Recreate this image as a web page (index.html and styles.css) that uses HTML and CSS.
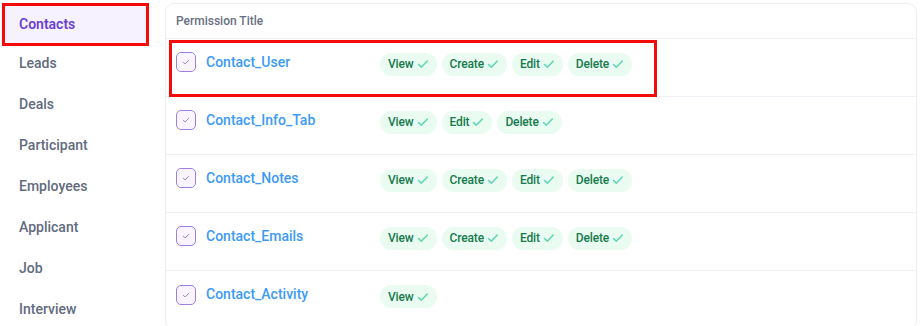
FILE: index.html
```html
<!DOCTYPE html>
<html lang="en">
<head>
    <meta charset="UTF-8">
    <title>Permissions</title>
    <link rel="stylesheet" href="styles.css">
</head>
<body>
    <div class="layout">
        <aside class="sidebar">
            <a class="side-item active" href="#">Contacts</a>
            <a class="side-item" href="#">Leads</a>
            <a class="side-item" href="#">Deals</a>
            <a class="side-item" href="#">Participant</a>
            <a class="side-item" href="#">Employees</a>
            <a class="side-item" href="#">Applicant</a>
            <a class="side-item" href="#">Job</a>
            <a class="side-item" href="#">Interview</a>
        </aside>

        <div class="card">
            <div class="card-head">Permission Title</div>

            <div class="perm-row">
                <span class="check-box"><svg viewBox="0 0 20 20"><path d="M7 10.2l2 2 4-4"/></svg></span>
                <span class="perm-title">Contact_User</span>
                <div class="pills">
                    <span class="pill">View <svg viewBox="0 0 12 12"><path d="M1.5 6.5l2.8 2.7 6-6.2"/></svg></span>
                    <span class="pill">Create <svg viewBox="0 0 12 12"><path d="M1.5 6.5l2.8 2.7 6-6.2"/></svg></span>
                    <span class="pill">Edit <svg viewBox="0 0 12 12"><path d="M1.5 6.5l2.8 2.7 6-6.2"/></svg></span>
                    <span class="pill">Delete <svg viewBox="0 0 12 12"><path d="M1.5 6.5l2.8 2.7 6-6.2"/></svg></span>
                </div>
            </div>

            <div class="perm-row">
                <span class="check-box"><svg viewBox="0 0 20 20"><path d="M7 10.2l2 2 4-4"/></svg></span>
                <span class="perm-title">Contact_Info_Tab</span>
                <div class="pills">
                    <span class="pill">View <svg viewBox="0 0 12 12"><path d="M1.5 6.5l2.8 2.7 6-6.2"/></svg></span>
                    <span class="pill">Edit <svg viewBox="0 0 12 12"><path d="M1.5 6.5l2.8 2.7 6-6.2"/></svg></span>
                    <span class="pill">Delete <svg viewBox="0 0 12 12"><path d="M1.5 6.5l2.8 2.7 6-6.2"/></svg></span>
                </div>
            </div>

            <div class="perm-row">
                <span class="check-box"><svg viewBox="0 0 20 20"><path d="M7 10.2l2 2 4-4"/></svg></span>
                <span class="perm-title">Contact_Notes</span>
                <div class="pills">
                    <span class="pill">View <svg viewBox="0 0 12 12"><path d="M1.5 6.5l2.8 2.7 6-6.2"/></svg></span>
                    <span class="pill">Create <svg viewBox="0 0 12 12"><path d="M1.5 6.5l2.8 2.7 6-6.2"/></svg></span>
                    <span class="pill">Edit <svg viewBox="0 0 12 12"><path d="M1.5 6.5l2.8 2.7 6-6.2"/></svg></span>
                    <span class="pill">Delete <svg viewBox="0 0 12 12"><path d="M1.5 6.5l2.8 2.7 6-6.2"/></svg></span>
                </div>
            </div>

            <div class="perm-row">
                <span class="check-box"><svg viewBox="0 0 20 20"><path d="M7 10.2l2 2 4-4"/></svg></span>
                <span class="perm-title">Contact_Emails</span>
                <div class="pills">
                    <span class="pill">View <svg viewBox="0 0 12 12"><path d="M1.5 6.5l2.8 2.7 6-6.2"/></svg></span>
                    <span class="pill">Create <svg viewBox="0 0 12 12"><path d="M1.5 6.5l2.8 2.7 6-6.2"/></svg></span>
                    <span class="pill">Edit <svg viewBox="0 0 12 12"><path d="M1.5 6.5l2.8 2.7 6-6.2"/></svg></span>
                    <span class="pill">Delete <svg viewBox="0 0 12 12"><path d="M1.5 6.5l2.8 2.7 6-6.2"/></svg></span>
                </div>
            </div>

            <div class="perm-row">
                <span class="check-box"><svg viewBox="0 0 20 20"><path d="M7 10.2l2 2 4-4"/></svg></span>
                <span class="perm-title">Contact_Activity</span>
                <div class="pills">
                    <span class="pill">View <svg viewBox="0 0 12 12"><path d="M1.5 6.5l2.8 2.7 6-6.2"/></svg></span>
                </div>
            </div>
        </div>
    </div>

    <!-- annotation boxes -->
    <div class="mark mark-side"></div>
    <div class="mark mark-row"></div>
</body>
</html>
```

FILE: styles.css
```css
* {
    margin: 0;
    padding: 0;
    box-sizing: border-box;
    font-family: Roboto, "Liberation Sans", sans-serif;
}
body {
    background: #fff;
    overflow: hidden;
}
.layout {
    display: flex;
    align-items: flex-start;
    padding: 3px 3px 0 0;
}
.sidebar {
    width: 165px;
    flex-shrink: 0;
    display: flex;
    flex-direction: column;
    padding-right: 17px;
    padding-left: 4px;
    margin-top: 1px;
}
.side-item {
    display: flex;
    align-items: center;
    height: 41px;
    padding-left: 15px;
    padding-bottom: 3px;
    text-decoration: none;
    color: #626b7e;
    font-size: 14px;
    font-weight: 500;
}
.side-item.active {
    height: 39px;
    padding-bottom: 0;
    margin-bottom: 1px;
    background: #f6f2ff;
    color: #6a3fd3;
    font-weight: 600;
}
.card {
    flex: 1;
    border: 1px solid #eceef4;
    border-radius: 9px;
}
.card-head {
    height: 35px;
    display: flex;
    align-items: center;
    padding-left: 10px;
    font-size: 12px;
    font-weight: 500;
    color: #687083;
    border-bottom: 1px solid #eef0f5;
}
.perm-row {
    display: flex;
    align-items: center;
    height: 58px;
    padding: 13px 10px 22px;
    border-bottom: 1px solid #eef0f5;
}
.perm-row:last-child {
    border-bottom: none;
}
.check-box {
    width: 20px;
    height: 20px;
    border: 1.5px solid #9d7fe2;
    border-radius: 5px;
    background: #f8f5ff;
    display: flex;
    align-items: center;
    justify-content: center;
    flex-shrink: 0;
    margin-top: -2px;
}
.check-box svg {
    width: 18px;
    height: 18px;
    fill: none;
    stroke: #9a86c9;
    stroke-width: 1.1;
    stroke-linecap: round;
    stroke-linejoin: round;
}
.perm-title {
    width: 174px;
    margin-left: 10px;
    font-size: 14px;
    font-weight: 500;
    color: #3d9bf3;
    margin-top: -3px;
}
.pills {
    display: flex;
    gap: 5px;
    margin-top: 2px;
}
.pill {
    display: flex;
    align-items: center;
    gap: 3px;
    height: 23px;
    padding: 0 8px;
    border-radius: 12px;
    background: #eafcf2;
    color: #167a4d;
    font-size: 12px;
    font-weight: 500;
    letter-spacing: -0.15px;
}
.pill svg {
    width: 12px;
    height: 12px;
    fill: none;
    stroke: #62d6b5;
    stroke-width: 1.6;
    stroke-linecap: round;
    stroke-linejoin: round;
}
.mark {
    position: absolute;
    border: 3px solid #f50a0a;
}
.mark-side {
    left: 2px;
    top: 3px;
    width: 147px;
    height: 43px;
}
.mark-row {
    left: 169px;
    top: 40px;
    width: 488px;
    height: 57px;
}
```
